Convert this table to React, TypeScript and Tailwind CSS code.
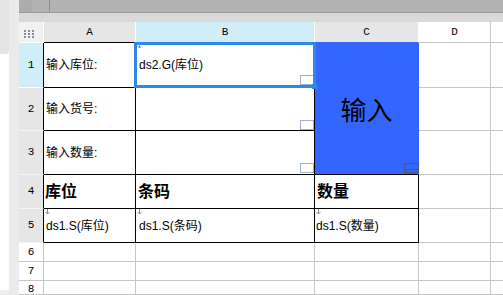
import React from "react";

const mono = "font-['Liberation_Mono',monospace] text-[11px]";
const gray = "border-[#c6c6c6]";

function DownArrow({ className = "" }: { className?: string }) {
  return (
    <svg width="5" height="6" viewBox="0 0 5 6" className={`absolute z-20 ${className}`}>
      <path d="M2.5 0V5M0.5 3L2.5 5L4.5 3" stroke="#8c8c8c" strokeWidth="1" fill="none" />
    </svg>
  );
}

function NoteMark({ className = "" }: { className?: string }) {
  return <div className={`absolute right-0 w-[14px] h-[10px] border border-[#9eb0c8] bg-white ${className}`} />;
}

function ColHead({ label, cls }: { label: string; cls: string }) {
  return <div className={`flex items-center justify-center border-r border-b ${mono} ${cls}`}>{label}</div>;
}

function RowHead({ n, cls }: { n: number; cls: string }) {
  return <div className={`flex items-center justify-center border-r border-b leading-none ${mono} ${cls}`}>{n}</div>;
}

const dataCell = "relative flex items-center border-r border-b border-black";
const emptyCell = `border-r border-b ${gray}`;
const lastCell = `border-b ${gray}`;

export default function App() {
  return (
    <div className="flex w-[503px] h-[295px] overflow-hidden bg-white text-black font-['Liberation_Sans','Noto_Sans_CJK_SC',sans-serif]">
      {/* left edge strips */}
      <div className="w-[9px] flex flex-col">
        <div className="h-[54px] shrink-0 bg-[#e4e4e4] rounded-br-[4px]" />
        <div className="flex-1" />
        <div className="h-[5px] shrink-0 bg-[#efefef]" />
      </div>
      <div className="w-[10px] bg-[#ebebeb]" />

      <div className="flex-1 flex flex-col min-w-0 min-h-0">
        {/* toolbar stubs */}
        <div className="h-[13px] shrink-0 flex border-b border-[#9a9a9a] bg-[#b3b3b3]">
          <div className="w-[13px] bg-[#acacac]" />
          <div className="w-[18px] border-r border-[#8f8f8f]" />
        </div>
        <div className="h-[9px] shrink-0 bg-[#d9d9d9]" />

        {/* sheet */}
        <div className="flex-1 min-h-0 grid grid-cols-[25px_92px_179px_104px_72px_12px] grid-rows-[21px_45px_43px_44px_34px_34px_19px_19px_minmax(0,1fr)] text-[12px]">
          {/* header row */}
          <div className="bg-[#f2f2f4] border-r border-b border-white pl-[5px] pt-[8px]">
            <svg width="10" height="8" viewBox="0 0 10 8" className="block">
              {[0, 4, 8].map((x) =>
                [0, 3, 6].map((y) => <rect key={`${x}-${y}`} x={x} y={y} width="2" height="2" fill="#8e8e8e" />)
              )}
            </svg>
          </div>
          <ColHead label="A" cls="bg-[#e6e6e6] border-r-white border-b-black" />
          <ColHead label="B" cls="bg-[#d0eefa] border-r-white border-b-[#2f87ea]" />
          <ColHead label="C" cls="bg-[#e6e6e6] border-r-white border-b-[#3366ff]" />
          <ColHead label="D" cls={`bg-white ${gray}`} />
          <div className={lastCell} />

          {/* row 1 */}
          <RowHead n={1} cls="bg-[#d0eefa] border-r-black border-b-white" />
          <div className={`${dataCell} pl-[2px]`}>输入库位:</div>
          <div className={`${dataCell} pl-[3px]`}>
            ds2.G(库位)
            <DownArrow className="left-[1px] top-0" />
            <NoteMark className="bottom-[2px]" />
            <div className="absolute z-10 -left-[2px] -top-[1px] -right-[2px] -bottom-[1px] border-[3px] border-[#2f87ea]" />
            <div className="absolute z-10 -right-[3px] -bottom-[2px] w-[5px] h-[5px] bg-[#2f87ea]" />
          </div>
          <div className="row-span-3 relative flex items-center justify-center pt-[5px] bg-[#3366ff] border-r border-r-[#3366ff] border-b border-b-black text-[26px]">
            输入
            <div className="absolute -right-[1px] bottom-[1px] w-[15px] h-[10px] border border-[#4a5578]">
              <div className="mt-[5px] border-t border-[#4a5578]" />
            </div>
          </div>
          <div className={emptyCell} />
          <div className={lastCell} />

          {/* row 2 */}
          <RowHead n={2} cls="bg-[#e6e6e6] border-r-black border-b-[#f4f4f4]" />
          <div className={`${dataCell} pl-[2px]`}>输入货号:</div>
          <div className={dataCell}>
            <NoteMark className="bottom-0" />
          </div>
          <div className={emptyCell} />
          <div className={lastCell} />

          {/* row 3 */}
          <RowHead n={3} cls="bg-[#e6e6e6] border-r-black border-b-[#f4f4f4]" />
          <div className={`${dataCell} pl-[2px]`}>输入数量:</div>
          <div className={dataCell}>
            <NoteMark className="bottom-[1px]" />
          </div>
          <div className={emptyCell} />
          <div className={lastCell} />

          {/* row 4 */}
          <RowHead n={4} cls="bg-[#e6e6e6] border-r-black border-b-[#f4f4f4]" />
          <div className={`${dataCell} pl-[1px] text-[16px] font-bold`}>库位</div>
          <div className={`${dataCell} pl-[2px] text-[16px] font-bold`}>条码</div>
          <div className={`${dataCell} pl-[2px] text-[16px] font-bold`}>数量</div>
          <div className={emptyCell} />
          <div className={lastCell} />

          {/* row 5 */}
          <RowHead n={5} cls="bg-[#e6e6e6] border-r-black border-b-[#f4f4f4]" />
          <div className={`${dataCell} pl-[2px]`}>
            <DownArrow className="left-[1px] top-0" />
            ds1.S(库位)
          </div>
          <div className={`${dataCell} pl-[3px]`}>
            <DownArrow className="left-[1px] top-0" />
            ds1.S(条码)
          </div>
          <div className={`${dataCell} pl-[1px]`}>
            <DownArrow className="left-[1px] top-0" />
            ds1.S(数量)
          </div>
          <div className={emptyCell} />
          <div className={lastCell} />

          {/* rows 6-8 */}
          {[6, 7, 8].map((n) => (
            <React.Fragment key={n}>
              <RowHead n={n} cls={`bg-white ${gray} ${n === 8 ? "items-start pt-[3px]" : ""}`} />
              <div className={emptyCell} />
              <div className={emptyCell} />
              <div className={emptyCell} />
              <div className={emptyCell} />
              <div className={lastCell} />
            </React.Fragment>
          ))}
        </div>
      </div>
    </div>
  );
}
